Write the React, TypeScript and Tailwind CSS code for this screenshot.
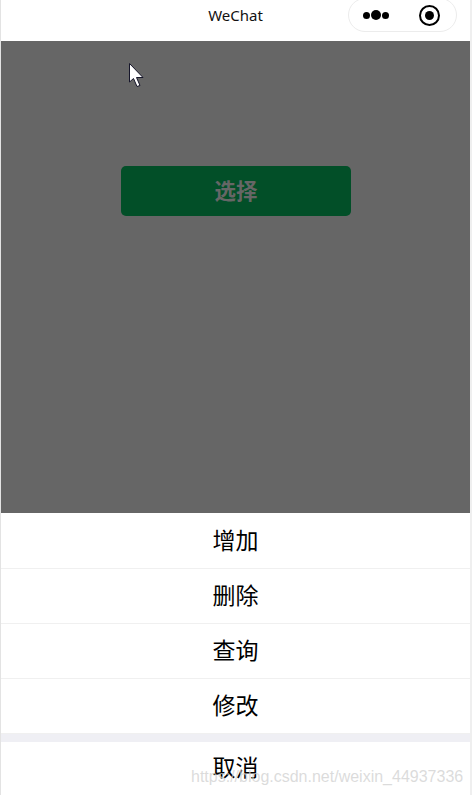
const menuItems = ["增加", "删除", "查询", "修改"]

const cjkFont = "font-['Liberation_Sans','Noto_Sans_CJK_SC',sans-serif]"

function Cursor() {
  return (
    <svg className="absolute left-[125px] top-[21px]" width="18" height="26" viewBox="0 0 18 26">
      <path
        d="M3.5 1.5V20L7.5 16.5L11 24.5L14 23.5L10.5 15.5H17Z"
        fill="#fff"
        stroke="#15152a"
        strokeWidth="1"
      />
    </svg>
  )
}

function Capsule() {
  return (
    <div className="flex h-[34px] w-[109px] items-center rounded-full border border-[#ececec] bg-white pl-[14px]">
      <div className="flex items-center gap-[1px]">
        <span className="h-[7px] w-[7px] rounded-full bg-black" />
        <span className="h-[10px] w-[10px] rounded-full bg-black" />
        <span className="h-[7px] w-[7px] rounded-full bg-black" />
      </div>
      <div className="ml-[30px] flex h-[21px] w-[21px] items-center justify-center rounded-full border-[2.5px] border-black">
        <span className="h-[9px] w-[9px] rounded-full bg-black" />
      </div>
    </div>
  )
}

export default function App() {
  return (
    <div className={`relative flex h-[795px] w-[472px] flex-col overflow-hidden border-l border-r-2 border-l-[#e3e3e3] border-r-[#efefef] bg-white text-black ${cjkFont}`}>
      {/* Title bar */}
      <div className="relative flex h-[41px] shrink-0 justify-center bg-white pt-[8px]">
        <span className="font-['Noto_Sans',sans-serif] text-[15px] leading-[15px] text-[#111]">WeChat</span>
        <div className="absolute left-[347px] top-[-2px]">
          <Capsule />
        </div>
      </div>

      {/* Dimmed page */}
      <div className="relative flex h-[472px] shrink-0 flex-col items-center bg-[#666666] pl-[1px] pt-[125px]">
        <Cursor />
        <button className="flex h-[50px] w-[230px] items-center justify-center rounded-[5px] bg-[#024f28] pt-[3px] text-[21.5px] font-bold text-[#666666]">
          选择
        </button>
      </div>

      {/* Action sheet */}
      <div className="flex flex-1 flex-col bg-white">
        {menuItems.map((item) => (
          <div
            key={item}
            className="flex h-[55px] shrink-0 items-center justify-center border-b border-[#f0f0f0] pt-[1px] text-[23px] first:h-[56px] last:h-[54px] last:border-b-0"
          >
            {item}
          </div>
        ))}
        <div className="h-[8px] shrink-0 bg-[#efeff4]" />
        <div className="flex flex-1 items-center justify-center text-[23px]">取消</div>
      </div>

      {/* Image watermark */}
      <span className="absolute left-[190px] top-[767px] text-[16px] leading-5 whitespace-nowrap text-[#d0d0d0]/75">
        https://blog.csdn.net/weixin_44937336
      </span>
    </div>
  )
}
